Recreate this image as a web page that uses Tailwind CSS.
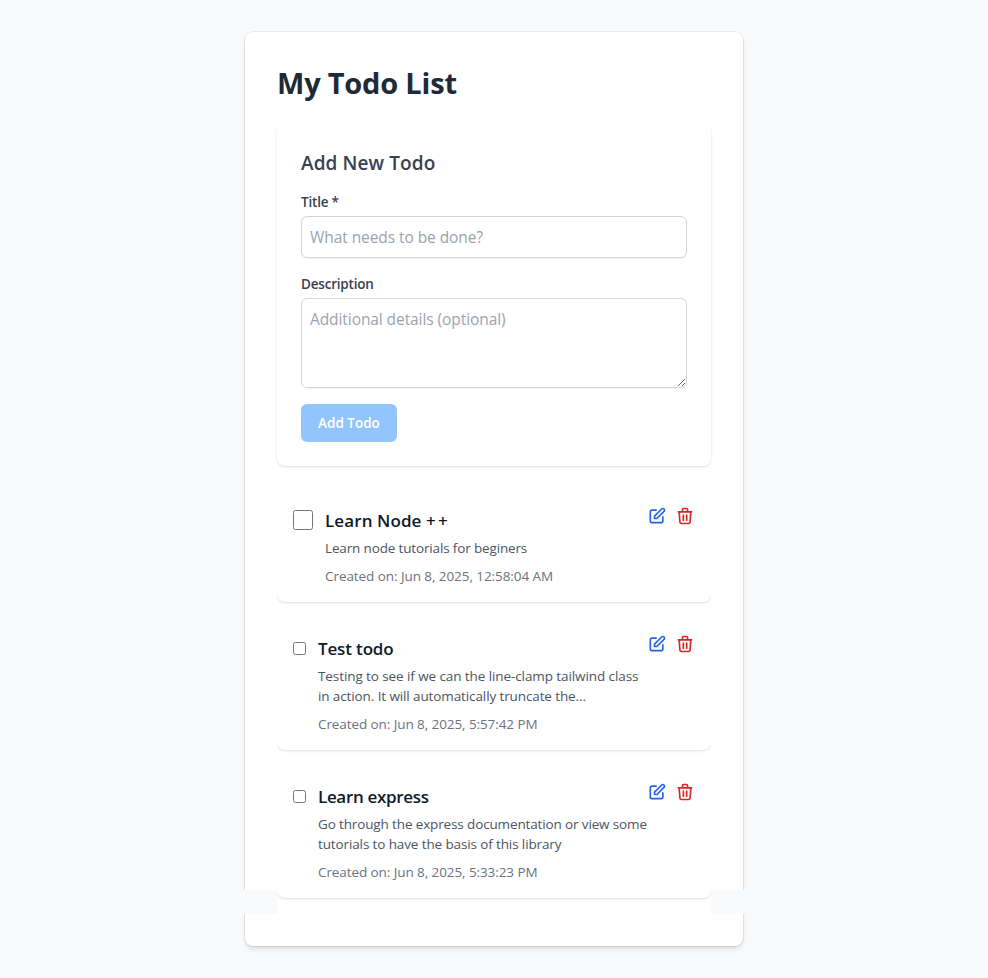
<!DOCTYPE html>
<html lang="en"><head><meta charset="utf-8"><title>My Todo List</title>
<script src="https://cdn.jsdelivr.net/npm/@tailwindcss/browser@4"></script></head>
<body class="bg-[#f9fafb] font-['Open_Sans','Noto_Sans',sans-serif] h-[978px] overflow-hidden">
<svg class="hidden"><symbol id="edit" viewBox="0 0 24 24"><path d="M11 5H6a2 2 0 00-2 2v11a2 2 0 002 2h11a2 2 0 002-2v-5m-1.414-9.414a2 2 0 112.828 2.828L11.828 15H9v-2.828l8.586-8.586z"/></symbol>
<symbol id="trash" viewBox="0 0 24 24"><path d="M19 7l-.867 12.142A2 2 0 0116.138 21H7.862a2 2 0 01-1.995-1.858L5 7m5 4v6m4-6v6m1-10V4a1 1 0 00-1-1h-4a1 1 0 00-1 1v3M4 7h16"/></symbol></svg>
<main class="pt-8">
<div class="relative mx-auto w-[498px] h-[914px] rounded-lg bg-white p-8 shadow-[0_0_0_1px_rgba(0,0,0,0.06),0_4px_6px_-1px_rgba(0,0,0,0.1),0_2px_4px_-2px_rgba(0,0,0,0.1)]">
<h1 class="pt-0.5 text-[29px] leading-[34px] font-bold tracking-[-0.2px] text-[#1f2937] mb-6 whitespace-nowrap">My Todo List</h1>
<form class="rounded-lg p-6 shadow-sm h-[342px]">
<h2 class="pt-0.5 text-[19px] leading-[26px] tracking-[0.1px] font-semibold text-[#374151] mb-4">Add New Todo</h2>
<label class="block text-[13.5px] leading-5 tracking-[-0.2px] font-semibold text-[#374151] mb-1">Title *</label>
<input class="block w-full h-[42px] rounded-md border border-[#d1d5db] p-2 text-[15.5px] tracking-[-0.07px] shadow-xs placeholder:text-[#9ca3af] mb-4" placeholder="What needs to be done?">
<label class="block text-[13.5px] leading-5 tracking-[-0.2px] font-semibold text-[#374151] mb-1">Description</label>
<textarea class="block w-full h-[90px] rounded-md border border-[#d1d5db] p-2 text-[15.5px] leading-6 tracking-[-0.08px] shadow-xs placeholder:text-[#9ca3af] mb-4" placeholder="Additional details (optional)"></textarea>
<button type="button" class="h-[38px] w-24 rounded-md bg-[#93c5fd] text-[13.5px] font-semibold text-white">Add Todo</button>
</form>
<div class="mt-6 flex flex-col gap-4 overflow-hidden pb-4">
<article class="flex p-4 rounded-lg shadow-sm">
<input type="checkbox" class="size-5 mt-1 mr-3">
<div class="flex-1 whitespace-nowrap">
<h3 class="pt-0.5 text-[17px] leading-[26px] tracking-[0.1px] font-semibold text-[#111827]">Learn Node <span class="tracking-[2.2px]">++</span></h3>
<p class="mt-1 text-[13.5px] leading-5 tracking-[-0.15px] text-[#4b5563]">Learn node tutorials for beginers</p>
<p class="mt-2 text-[13.5px] leading-5 tracking-[-0.07px] text-[#6b7280]">Created on: Jun 8, 2025, 12:58:04 AM</p>
</div>
<div class="flex gap-2"><svg class="size-5 fill-none stroke-[#2563eb] stroke-2" stroke-linecap="round" stroke-linejoin="round"><use href="#edit"/></svg><svg class="size-5 fill-none stroke-[#dc2626] stroke-2" stroke-linecap="round" stroke-linejoin="round"><use href="#trash"/></svg></div>
</article>
<article class="flex p-4 rounded-lg shadow-sm">
<input type="checkbox" class="size-[13px] mt-[7.5px] mr-3">
<div class="flex-1 whitespace-nowrap">
<h3 class="pt-0.5 text-[17px] leading-[26px] tracking-[-0.15px] font-semibold text-[#111827]">Test todo</h3>
<p class="mt-1 text-[13.5px] leading-5 text-[#4b5563]"><span class="tracking-[-0.09px]">Testing to see if we can the line-clamp tailwind class</span><br><span class="tracking-[-0.11px]">in action. It will automatically truncate the…</span></p>
<p class="mt-2 text-[13.5px] leading-5 tracking-[-0.085px] text-[#6b7280]">Created on: Jun 8, 2025, 5:57:42 PM</p>
</div>
<div class="flex gap-2"><svg class="size-5 fill-none stroke-[#2563eb] stroke-2" stroke-linecap="round" stroke-linejoin="round"><use href="#edit"/></svg><svg class="size-5 fill-none stroke-[#dc2626] stroke-2" stroke-linecap="round" stroke-linejoin="round"><use href="#trash"/></svg></div>
</article>
<article class="flex p-4 rounded-lg shadow-sm">
<input type="checkbox" class="size-[13px] mt-[7.5px] mr-3">
<div class="flex-1 whitespace-nowrap">
<h3 class="pt-0.5 text-[17px] leading-[26px] tracking-[-0.33px] font-semibold text-[#111827]">Learn express</h3>
<p class="mt-1 text-[13.5px] leading-5 text-[#4b5563]"><span class="tracking-[-0.135px]">Go through the express documentation or view some</span><br><span class="tracking-[-0.12px]">tutorials to have the basis of this library</span></p>
<p class="mt-2 text-[13.5px] leading-5 tracking-[-0.085px] text-[#6b7280]">Created on: Jun 8, 2025, 5:33:23 PM</p>
</div>
<div class="flex gap-2"><svg class="size-5 fill-none stroke-[#2563eb] stroke-2" stroke-linecap="round" stroke-linejoin="round"><use href="#edit"/></svg><svg class="size-5 fill-none stroke-[#dc2626] stroke-2" stroke-linecap="round" stroke-linejoin="round"><use href="#trash"/></svg></div>
</article>
</div>
<div class="absolute -left-2 bottom-8 h-6 w-10 bg-[#f9fafb]"></div>
<div class="absolute -right-2 bottom-8 h-6 w-10 bg-[#f9fafb]"></div>
</div></main>
</body></html>
